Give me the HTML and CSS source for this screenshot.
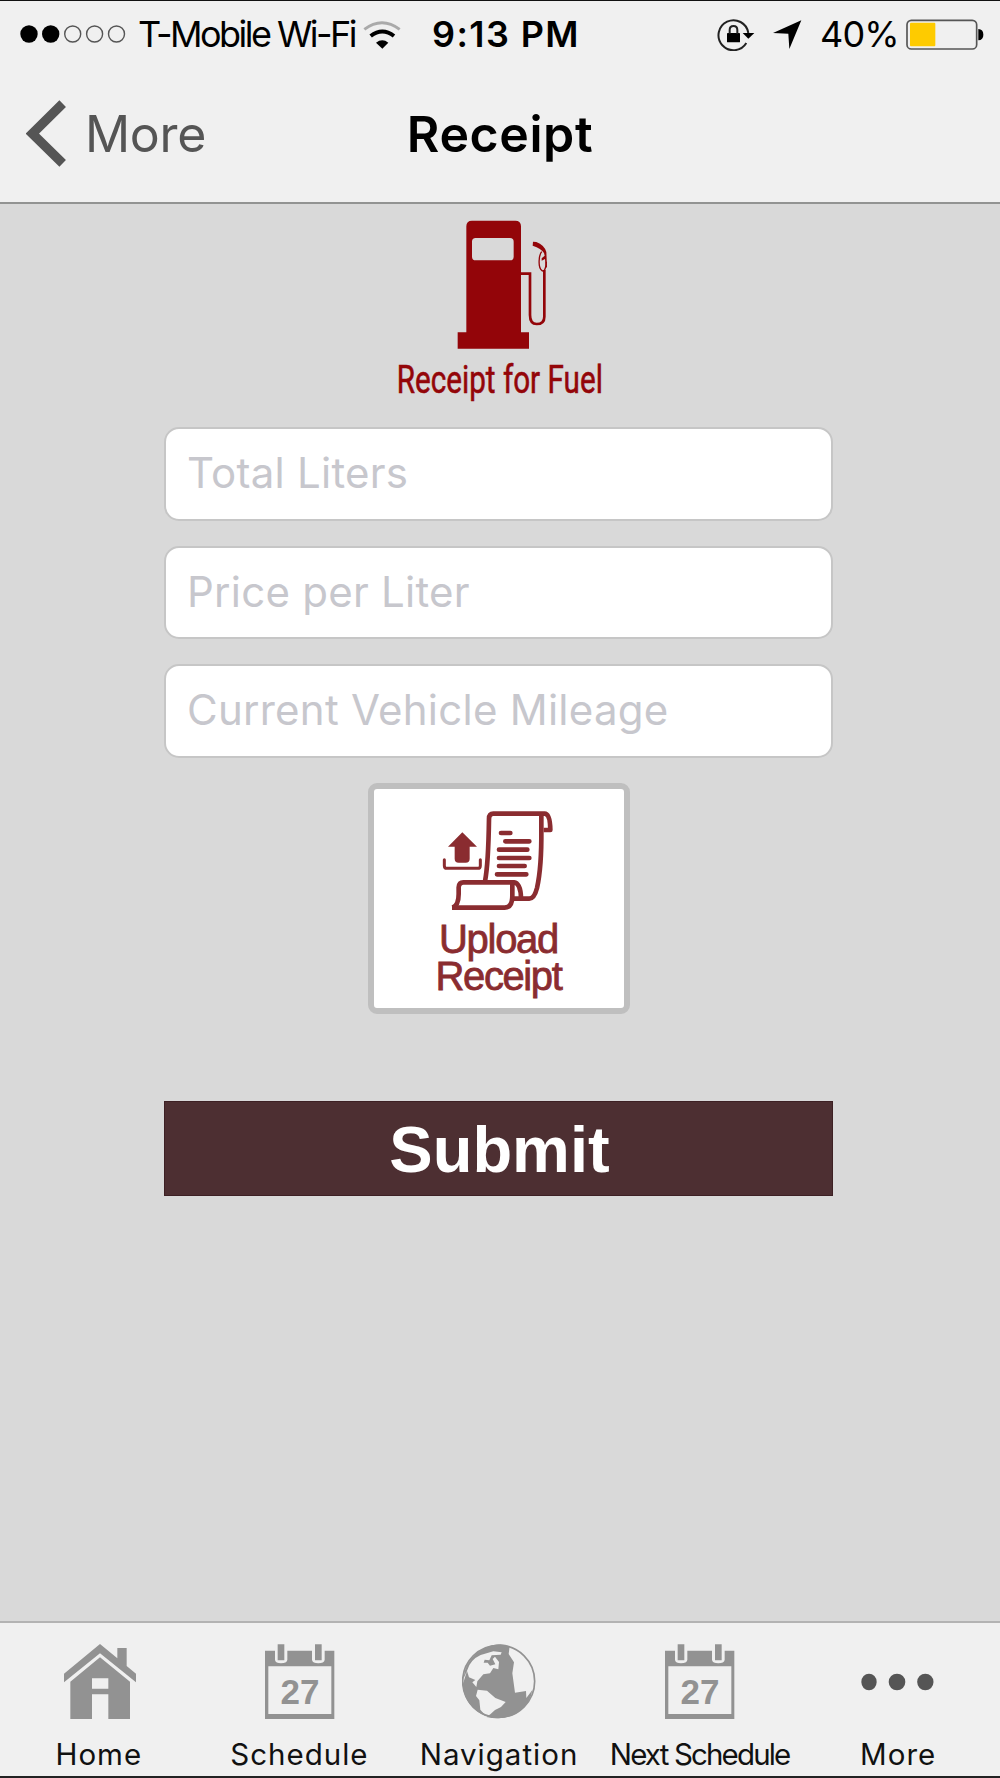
FILE: index.html
```html
<!DOCTYPE html>
<html lang="en">
<head>
    <meta charset="UTF-8">
    <meta name="viewport" content="width=device-width, initial-scale=1.0">
    <title>Receipt</title>
    <link rel="stylesheet" href="styles.css">
</head>
<body>
    <div class="screen">
        <header class="header">
            <div class="status-bar">
                <div class="status-left">
                    <svg class="signal" viewBox="0 0 106 18">
                        <circle cx="9" cy="9" r="8.7"/>
                        <circle cx="30.7" cy="9" r="8.7"/>
                        <circle class="empty" cx="52.7" cy="9" r="8"/>
                        <circle class="empty" cx="74.6" cy="9" r="8"/>
                        <circle class="empty" cx="96.5" cy="9" r="8"/>
                    </svg>
                    <span class="carrier">T-Mobile Wi-Fi</span>
                    <svg class="wifi" viewBox="1089 55 114 87">
                        <path class="weak" d="M1093 83 Q1146 43 1199 83"/>
                        <path class="strong" d="M1112 103 Q1147 76 1182 103"/>
                        <path d="M1128 123 Q1147 109 1165 123 L1147 141Z"/>
                    </svg>
                    <span class="time">9:13 PM</span>
                </div>
                <div class="status-right">
                    <svg class="lock" viewBox="648 50 114 99">
                        <path class="ring" d="M742 95 A45 45 0 1 0 736 125"/>
                        <path d="M725 95 H760 L742 112Z"/>
                        <rect x="678" y="95" width="39" height="28" rx="2"/>
                        <path class="shackle" d="M686 97 V86 Q686 74 697.500 74 Q709 74 709 86 V97"/>
                    </svg>
                    <svg class="arrow" viewBox="816 60 87 87">
                        <path d="M901 61 L865 147 L862 101 L816 99Z"/>
                    </svg>
                    <span class="percent">40%</span>
                    <svg class="battery" viewBox="1216 55 234 93">
                        <rect class="case" x="1219" y="59" width="209" height="86" rx="13"/>
                        <rect class="charge" x="1228" y="66" width="76" height="71" rx="3"/>
                        <path d="M1433 85 Q1448 86 1448 102 Q1448 118 1433 119Z"/>
                    </svg>
                </div>
            </div>
            <nav class="nav-bar">
                <a class="back" href="#">
                    <svg class="chevron" viewBox="78 298 120 201">
                        <path d="M188 309 L97 399 L188 488"/>
                    </svg>
                    <span>More</span>
                </a>
                <h1>Receipt</h1>
            </nav>
        </header>

        <main class="content">
            <div class="fuel">
                <svg class="pump" viewBox="231 42 276 396">
                    <path fill-rule="evenodd" d="M233 431 V382 H259 V64 Q259 47 276 47 H406 Q423 47 423 64 V382 H447 V431Z M287 99 Q276 99 276 110 V155 Q276 166 287 166 H390 Q401 166 401 155 V110 Q401 99 390 99Z"/>
                    <path class="hose" d="M422 206 H450 V330 Q450 357 470 357 Q493 357 493 335 V195"/>
                    <path d="M459 110 L469 111 Q493 120 499 141 L501 187 L497 188 L495 162 L485 167 L485 160 L494 152 L492 144 Q484 130 458 122Z"/>
                    <path class="nozzle" d="M485 140 Q475 153 478 181 Q480 196 491 199 Q498 190 499 170"/>
                </svg>
                <h2>Receipt for Fuel</h2>
            </div>

            <form class="receipt-form" action="#">
                <input type="text" name="liters" placeholder="Total Liters">
                <input type="text" name="price" placeholder="Price per Liter">
                <input type="text" name="mileage" placeholder="Current Vehicle Mileage">
                <button type="button" class="upload">
                    <svg class="scroll" viewBox="276 118 333 303">
                        <path d="M337 185 L381 228 H359 V264 Q359 276 347 276 H326 Q314 276 314 264 V228 H294Z"/>
                        <path class="tray" d="M283 267 V285 Q283 293 291 293 H383 Q391 293 391 285 V267"/>
                        <path class="paper" d="M405 332 Q415 280 417 145 Q417 129 430 129 H584 Q600 129 601 178 H581"/>
                        <path class="paper" d="M574 131 V178 Q575 290 561 352 Q553 384 538 384 H490"/>
                        <path class="paper" d="M307 411 Q326 405 326 370 V350 Q327 335 340 335 H492 Q512 338 513 382"/>
                        <path class="paper" d="M306 411 H464 Q487 411 487 375 V338"/>
                        <path class="lines" d="M453 187 H481 M466 212 H538 M447 237 H532 M447 262 H538 M447 286 H524 M441 311 H529"/>
                    </svg>
                    <span class="up">Upload</span>
                    <span class="rc">Receipt</span>
                </button>
                <button type="submit" class="submit">Submit</button>
            </form>
        </main>

        <footer class="tab-bar">
            <a class="tab" href="#">
                <svg viewBox="189 102 222 225">
                    <path d="M192 191 L300 102 L352 145 V114 H380 V168 L408 191 V217 L300 130 L192 217Z"/>
                    <path fill-rule="evenodd" d="M300 142 L390 215 V327 H325 V253 H276 V327 H211 V215Z M276 205 V236 H325 V205Z"/>
                </svg>
                <span class="t-home">Home</span>
            </a>
            <a class="tab" href="#">
                <svg viewBox="787 102 222 225">
                    <path fill-rule="evenodd" d="M796 122 H826 V150 Q828 160 844 160 Q861 160 863 150 V122 H937 V150 Q939 160 956 160 Q973 160 975 150 V122 H1004 V327 H796Z M806 169 V312 H995 V169Z"/>
                    <path d="M834 103 H854 V151 H834Z M946 103 H966 V151 H946Z"/>
                    <text x="901" y="281">27</text>
                </svg>
                <span class="t-schedule">Schedule</span>
            </a>
            <a class="tab" href="#">
                <svg viewBox="186 102 222 225">
                    <circle class="globe" cx="296" cy="214" r="108"/>
                    <path d="M250 116 Q295 95 329 108 L326 132 L342 157 L337 190 L345 248 L378 243 L379 264 L397 240 Q393 276 356 306 Q316 333 259 321 L271 313 L285 300 L303 291 L317 276 L286 264 L261 242 L233 239 L228 258 L238 271 L241 299 L258 319 Q194 292 188 224 L201 183 L207 202 L226 210 L217 217 L229 231 L232 214 L250 193 L270 190 L280 174 L295 178 L297 156 L285 140 L278 147 L286 163 L270 167 L263 158 L251 158 L254 149 L268 151 L275 136 L302 134 L305 127 L280 124 L242 135 Q211 149 202 180 L191 205 Q194 150 250 116Z"/>
                </svg>
                <span class="t-navigation">Navigation</span>
            </a>
            <a class="tab" href="#">
                <svg viewBox="787 102 222 225">
                    <path fill-rule="evenodd" d="M796 122 H826 V150 Q828 160 844 160 Q861 160 863 150 V122 H937 V150 Q939 160 956 160 Q973 160 975 150 V122 H1004 V327 H796Z M806 169 V312 H995 V169Z"/>
                    <path d="M834 103 H854 V151 H834Z M946 103 H966 V151 H946Z"/>
                    <text x="901" y="281">27</text>
                </svg>
                <span class="t-next">Next Schedule</span>
            </a>
            <a class="tab active" href="#">
                <svg viewBox="782 102 222 225">
                    <ellipse cx="806" cy="216" rx="23" ry="25"/>
                    <ellipse cx="890" cy="216" rx="25" ry="25"/>
                    <ellipse cx="975" cy="216" rx="24.500" ry="25"/>
                </svg>
                <span class="t-more">More</span>
            </a>
        </footer>
    </div>
</body>
</html>
```
FILE: styles.css
```css
* {
    box-sizing: border-box;
}

body {
    margin: 0;
    font-family: Inter, "Liberation Sans", sans-serif;
    background: #d9d9d9;
}

a {
    text-decoration: none;
}

svg {
    display: block;
    flex: none;
}

.screen {
    width: 1000px;
    height: 1778px;
    display: flex;
    flex-direction: column;
    border-top: 1px solid #111;
    border-bottom: 2px solid #222;
    overflow: hidden;
}

.header {
    height: 203px;
    background: #f0f0f0;
    border-bottom: 2px solid #929392;
}

/* status bar */
.status-bar {
    height: 66px;
    padding: 0 16px 0 20px;
    display: flex;
    justify-content: space-between;
    font-size: 36px;
    line-height: 66px;
    white-space: nowrap;
}

.status-left,
.status-right {
    display: flex;
    align-items: center;
}

.signal {
    width: 106px;
    height: 18px;
}

.signal .empty {
    fill: none;
    stroke: #555;
    stroke-width: 1.4;
}

.carrier {
    width: 225px;
    margin-left: 12px;
    letter-spacing: -2.55px;
}

.wifi {
    width: 38px;
    height: 29px;
}

.wifi .weak,
.wifi .strong {
    fill: none;
    stroke: #aaa;
    stroke-width: 9;
}

.wifi .strong {
    stroke: #000;
    stroke-width: 12;
}

.time {
    margin-left: 31px;
    font-weight: 600;
    letter-spacing: 1.4px;
}

.lock {
    width: 38px;
    height: 33px;
}

.lock .ring,
.lock .shackle {
    fill: none;
    stroke: #222;
    stroke-width: 6;
}

.arrow {
    width: 29px;
    height: 29px;
    margin-left: 18px;
}

.percent {
    width: 77px;
    margin: 0 9px 0 18px;
    letter-spacing: -0.8px;
}

.battery {
    width: 78px;
    height: 31px;
}

.battery .case {
    fill: none;
    stroke: #555;
    stroke-width: 5;
}

.battery .charge {
    fill: #fecb00;
}

/* navigation bar */
.nav-bar {
    height: 134px;
    padding: 0 26px;
    display: grid;
    grid-template-columns: 1fr auto 1fr;
    align-items: center;
    font-size: 50px;
    line-height: 134px;
}

.back {
    display: flex;
    align-items: center;
    gap: 19px;
    color: #555;
    letter-spacing: -0.3px;
}

.chevron {
    width: 40px;
    height: 67px;
    margin-top: -2px;
}

.chevron path {
    fill: none;
    stroke: #555;
    stroke-width: 28;
}

.nav-bar h1 {
    margin: 0;
    font-size: 50px;
    font-weight: 600;
    letter-spacing: 0.6px;
}

/* content */
.content {
    flex: 1;
    padding-top: 15px;
    display: flex;
    flex-direction: column;
    align-items: center;
}

.fuel {
    height: 208px;
    display: flex;
    flex-direction: column;
    align-items: center;
    color: #930509;
}

.pump {
    width: 92px;
    height: 132px;
    margin-left: 7px;
    fill: #930509;
}

.pump .hose,
.pump .nozzle {
    fill: none;
    stroke: #930509;
    stroke-width: 8;
}

.pump .nozzle {
    stroke-width: 4;
}

.fuel h2 {
    margin: 7px 0 0;
    font-family: Roboto, sans-serif;
    font-size: 38.5px;
    font-weight: 400;
    line-height: 44px;
    white-space: nowrap;
    transform: scaleX(0.77);
    -webkit-text-stroke: 0.6px #930509;
}

.receipt-form {
    margin-right: 3px;
    display: flex;
    flex-direction: column;
    align-items: center;
}

.receipt-form input {
    width: 669px;
    height: 93.500px;
    margin: 0 0 25px;
    padding: 0 21px 2px;
    border: 2px solid #c6c6c6;
    border-radius: 15px;
    background: #fff;
    font-family: Inter, sans-serif;
    font-size: 42px;
    letter-spacing: 0.25px;
    outline: none;
}

.receipt-form input::placeholder {
    color: #c7c7cd;
    opacity: 1;
}

.upload {
    width: 262px;
    height: 231px;
    padding: 21px 0 0;
    display: flex;
    flex-direction: column;
    align-items: center;
    border: 6px solid #bfbfbf;
    border-radius: 9px;
    background: #fff;
    color: #8a2c30;
    font-family: "Liberation Sans", Arial, sans-serif;
    font-size: 40px;
    line-height: 37.500px;
    -webkit-text-stroke: 0.8px #8a2c30;
}

.scroll {
    width: 111px;
    height: 101px;
    margin: 0 2px 10px 0;
    fill: #8a2c30;
    stroke-width: 0;
}

.scroll .tray,
.scroll .paper,
.scroll .lines {
    fill: none;
    stroke: #8a2c30;
    stroke-width: 14;
    stroke-linejoin: round;
}

.scroll .tray {
    stroke-width: 9;
    stroke-linecap: round;
}

.scroll .lines {
    stroke-linecap: round;
}

.up {
    letter-spacing: -1.3px;
}

.rc {
    letter-spacing: -1.4px;
}

.submit {
    width: 669px;
    height: 95px;
    margin-top: 87px;
    padding: 2px 0 0 2px;
    border: 1px solid #3d2024;
    background: #4d2f32;
    color: #fff;
    font-family: "Liberation Sans", Arial, sans-serif;
    font-size: 65px;
    font-weight: bold;
}

/* tab bar */
.tab-bar {
    height: 155px;
    padding-right: 2px;
    display: grid;
    grid-template-columns: repeat(5, 1fr);
    background: #f0f0f0;
    border-top: 2px solid #b3b3b3;
}

.tab {
    padding-top: 21px;
    display: flex;
    flex-direction: column;
    align-items: center;
    color: #111;
    font-size: 29.500px;
    white-space: nowrap;
}

.tab svg {
    width: 74px;
    height: 75px;
    fill: #929292;
}

.tab.active svg {
    fill: #555;
}

.tab text {
    font-family: "Liberation Sans", Arial, sans-serif;
    font-size: 105px;
    font-weight: bold;
    text-anchor: middle;
}

.globe {
    fill: none;
    stroke: #929292;
    stroke-width: 5;
}

.tab span {
    margin-top: 17px;
    line-height: 36px;
    letter-spacing: 1px;
}

.tab .t-home {
    margin-right: 2px;
}

.tab .t-next {
    margin-left: 2px;
    letter-spacing: -1.85px;
}
```
